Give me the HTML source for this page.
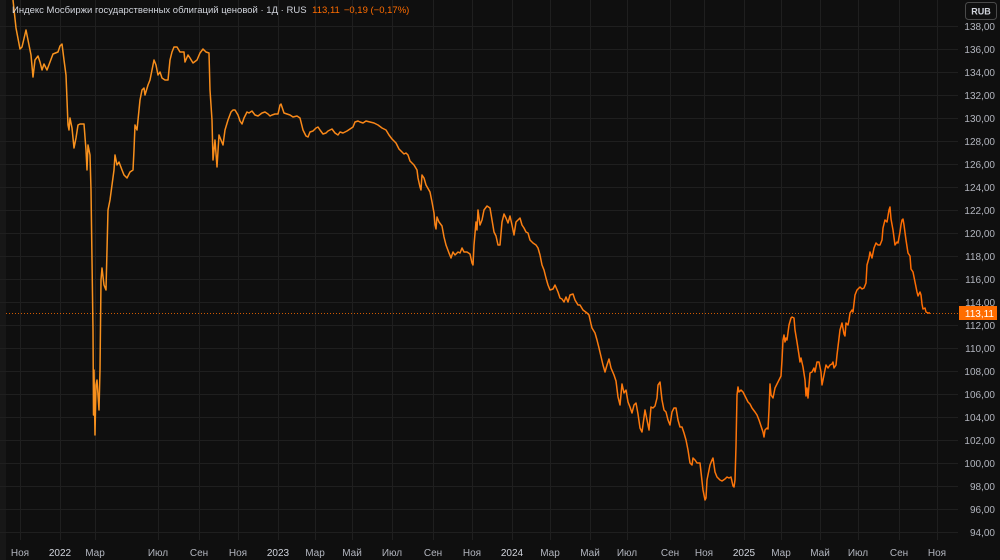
<!DOCTYPE html>
<html><head><meta charset="utf-8"><style>
html,body{margin:0;padding:0;background:#0f0f0f;width:1000px;height:560px;overflow:hidden;font-family:"Liberation Sans","DejaVu Sans",sans-serif}
svg{display:block}
</style></head><body>
<svg width="1000" height="560" viewBox="0 0 1000 560" xmlns="http://www.w3.org/2000/svg">
<defs>
<linearGradient id="lg" x1="0" y1="0" x2="960" y2="0" gradientUnits="userSpaceOnUse">
<stop offset="0" stop-color="#f7941f"/><stop offset="0.45" stop-color="#f98316"/><stop offset="1" stop-color="#ff6a00"/>
</linearGradient>
<clipPath id="cp"><rect x="0" y="0" width="958" height="540"/></clipPath>
</defs>
<rect width="1000" height="560" fill="#0f0f0f"/>
<rect x="0" y="0" width="6" height="560" fill="#171717"/>
<g stroke="#1f1f1f" stroke-width="1">
<path d="M0 26.5H958M0 49.5H958M0 72.5H958M0 95.5H958M0 118.5H958M0 141.5H958M0 164.5H958M0 187.5H958M0 210.5H958M0 233.5H958M0 256.5H958M0 279.5H958M0 302.5H958M0 325.5H958M0 348.5H958M0 371.5H958M0 394.5H958M0 417.5H958M0 440.5H958M0 463.5H958M0 486.5H958M0 509.5H958M0 532.5H958"/>
<path d="M20.5 0V540M60.5 0V540M95.5 0V540M158.5 0V540M199.5 0V540M238.5 0V540M278.5 0V540M315.5 0V540M352.5 0V540M392.5 0V540M433.5 0V540M472.5 0V540M512.5 0V540M550.5 0V540M590.5 0V540M627.5 0V540M670.5 0V540M704.5 0V540M744.5 0V540M781.5 0V540M820.5 0V540M858.5 0V540M899.5 0V540M937.5 0V540"/>
</g>
<line x1="6" y1="313.5" x2="958" y2="313.5" stroke="#ff6d00" stroke-width="1" stroke-dasharray="1,2" opacity="0.8"/>
<g clip-path="url(#cp)">
<polyline fill="none" stroke="url(#lg)" stroke-width="1.5" stroke-linejoin="round" points="13,0 16,28 20,49 22,47 26,30 28,40 31,55 33,77 35,60 38,56 40,62 42,70 44,64 47,70 50,62 53,54 58,52 60,46 62,44 64,60 66,75 68,125 69,130 70,118 72,128 74,148 76,138 78,125 80,124 84,124 86,150 87,170 88,145 90,155 91,190 92,260 93,330 93.5,415 94,370 95,435 96,385 97,380 99,410 100,370 101,280 102,268 104,285 106,290 107,250 108,210 110,200 112,185 114,170 115,155 117,165 119,162 122,170 124,175 127,178 130,172 133,170 134,150 135,125 137,130 140,100 142,90 144,88 145,95 148,85 150,80 152,70 154,60 156,65 158,75 160,72 162,78 165,80 168,80 170,60 172,52 174,47 177,47 180,52 184,52 185,62 188,55 190,58 193,63 197,60 200,53 203,49 206,52 209,53 210,90 212,120 213,160 215,140 217,167 219,135 221,140 223,145 225,130 228,120 231,112 233,110 235,110 238,115 240,121 242,124 244,118 247,112 249,113 252,111 255,115 258,116 262,113 265,112 268,114 270,116 272,115 275,114 278,114 280,105 281,104 284,113 287,114 290,115 293,117 297,116 300,118 303,130 306,136 308,137 310,132 313,131 316,128 318,127 320,130 323,134 326,133 328,131 332,129 335,133 338,135 340,132 343,133 347,131 350,129 353,127 355,122 358,121 360,122 363,123 366,121 370,122 374,123 378,125 382,128 386,130 389,135 392,139 396,143 399,149 402,152 404,154 406,153 408,155 410,161 414,165 417,170 418,178 420,187 421,190 422,175 424,178 426,185 430,192 432,202 434,213 435,225 436,229 437,217 439,222 442,226 444,237 446,245 449,253 451,258 453,252 455,255 458,252 460,253 462,248 464,252 467,252 470,254 472,263 473,265 474,245 476,222 477,230 478,210 480,225 482,220 484,210 487,206 490,208 492,220 494,232 496,236 498,245 500,245 502,222 504,214 506,218 508,223 510,216 512,225 514,235 516,222 518,220 520,218 522,225 524,228 526,232 528,233 530,240 533,243 536,245 538,248 540,255 542,265 544,270 546,278 548,285 550,290 553,289 555,285 558,292 560,298 562,299 564,302 566,297 568,302 570,295 573,294 575,300 578,305 580,305 583,310 587,313 589,315 591,324 592,328 595,333 597,340 599,348 603,365 605,372 607,365 609,359 611,368 614,375 616,381 618,397 620,405 622,384 624,393 626,390 628,402 630,407 632,413 634,405 636,403 638,414 640,428 642,432 645,410 647,420 649,430 651,407 653,408 655,406 657,398 658,385 660,382 662,400 664,410 666,412 668,420 670,425 672,412 674,408 676,408 678,420 680,427 682,427 684,433 686,440 688,450 690,463 692,465 693,458 695,460 697,463 700,463 701,472 703,490 705,500 706,498 707,480 710,465 712,460 713,458 715,472 717,477 720,480 722,481 725,479 727,477 729,478 731,477 733,486 734,487 735,480 736,446 737,395 738,387 739,392 741,390 743,392 746,398 748,402 750,404 752,408 755,412 757,415 759,420 761,426 763,432 764,437 765,430 767,428 768,429 769,410 770,384 771,395 773,398 775,388 777,384 780,378 781,376 782,360 783,340 784,335 785,342 786,338 787,340 789,325 791,318 792,317 794,318 795,330 797,342 799,355 800,362 801,358 803,367 805,380 806,396 807,388 808,398 810,373 812,372 814,368 815,372 817,362 819,362 821,372 822,385 824,375 826,365 828,368 830,365 832,364 833,362 834,368 836,365 837,355 840,330 842,323 844,334 845,336 846,323 848,325 849,320 850,313 852,310 853,312 855,295 857,290 860,287 862,289 864,288 866,283 867,265 869,258 870,252 872,258 874,248 876,243 878,245 880,245 882,240 883,228 885,220 887,222 889,210 890,207 891,219 893,230 895,245 897,242 898,243 900,232 901,225 902,220 903,219 904,225 906,240 908,253 910,256 911,269 913,272 915,282 917,292 918,296 920,292 921,295 922,304 923,309 925,308 926,312 928,313 930,313"/>
</g>
<g font-size="10" fill="#b2b5be" text-anchor="end" font-family="Liberation Sans, sans-serif">
<text x="995" y="30">138,00</text><text x="995" y="53">136,00</text><text x="995" y="76">134,00</text><text x="995" y="99">132,00</text><text x="995" y="122">130,00</text><text x="995" y="145">128,00</text><text x="995" y="168">126,00</text><text x="995" y="191">124,00</text><text x="995" y="214">122,00</text><text x="995" y="237">120,00</text><text x="995" y="260">118,00</text><text x="995" y="283">116,00</text><text x="995" y="306">114,00</text><text x="995" y="329">112,00</text><text x="995" y="352">110,00</text><text x="995" y="375">108,00</text><text x="995" y="398">106,00</text><text x="995" y="421">104,00</text><text x="995" y="444">102,00</text><text x="995" y="467">100,00</text><text x="995" y="490">98,00</text><text x="995" y="513">96,00</text><text x="995" y="536">94,00</text>
</g>
<rect x="959" y="306" width="38" height="14" fill="#ff6d00"/>
<text x="994" y="317" font-size="10" fill="#ffffff" text-anchor="end">113,11</text>
<rect x="965.5" y="2.5" width="31" height="17" rx="3" fill="#0f0f0f" stroke="#4a4a4a"/>
<text x="981" y="14.5" font-size="9" fill="#d1d4dc" text-anchor="middle" font-weight="bold">RUB</text>
<g font-size="10" fill="#b2b5be" text-anchor="middle">
<text x="20" y="556">Ноя</text><text x="60" y="556" fill="#d1d4dc">2022</text><text x="95" y="556">Мар</text><text x="158" y="556">Июл</text><text x="199" y="556">Сен</text><text x="238" y="556">Ноя</text><text x="278" y="556" fill="#d1d4dc">2023</text><text x="315" y="556">Мар</text><text x="352" y="556">Май</text><text x="392" y="556">Июл</text><text x="433" y="556">Сен</text><text x="472" y="556">Ноя</text><text x="512" y="556" fill="#d1d4dc">2024</text><text x="550" y="556">Мар</text><text x="590" y="556">Май</text><text x="627" y="556">Июл</text><text x="670" y="556">Сен</text><text x="704" y="556">Ноя</text><text x="744" y="556" fill="#d1d4dc">2025</text><text x="781" y="556">Мар</text><text x="820" y="556">Май</text><text x="858" y="556">Июл</text><text x="899" y="556">Сен</text><text x="937" y="556">Ноя</text>
</g>
<text x="12" y="13" font-size="9.5" fill="#d1d4dc">Индекс Мосбиржи государственных облигаций ценовой · 1Д · RUS <tspan fill="#ff6d00" dx="3">113,11</tspan><tspan fill="#ff6d00" dx="4">−0,19 (−0,17%)</tspan></text>
</svg>
</body></html>
